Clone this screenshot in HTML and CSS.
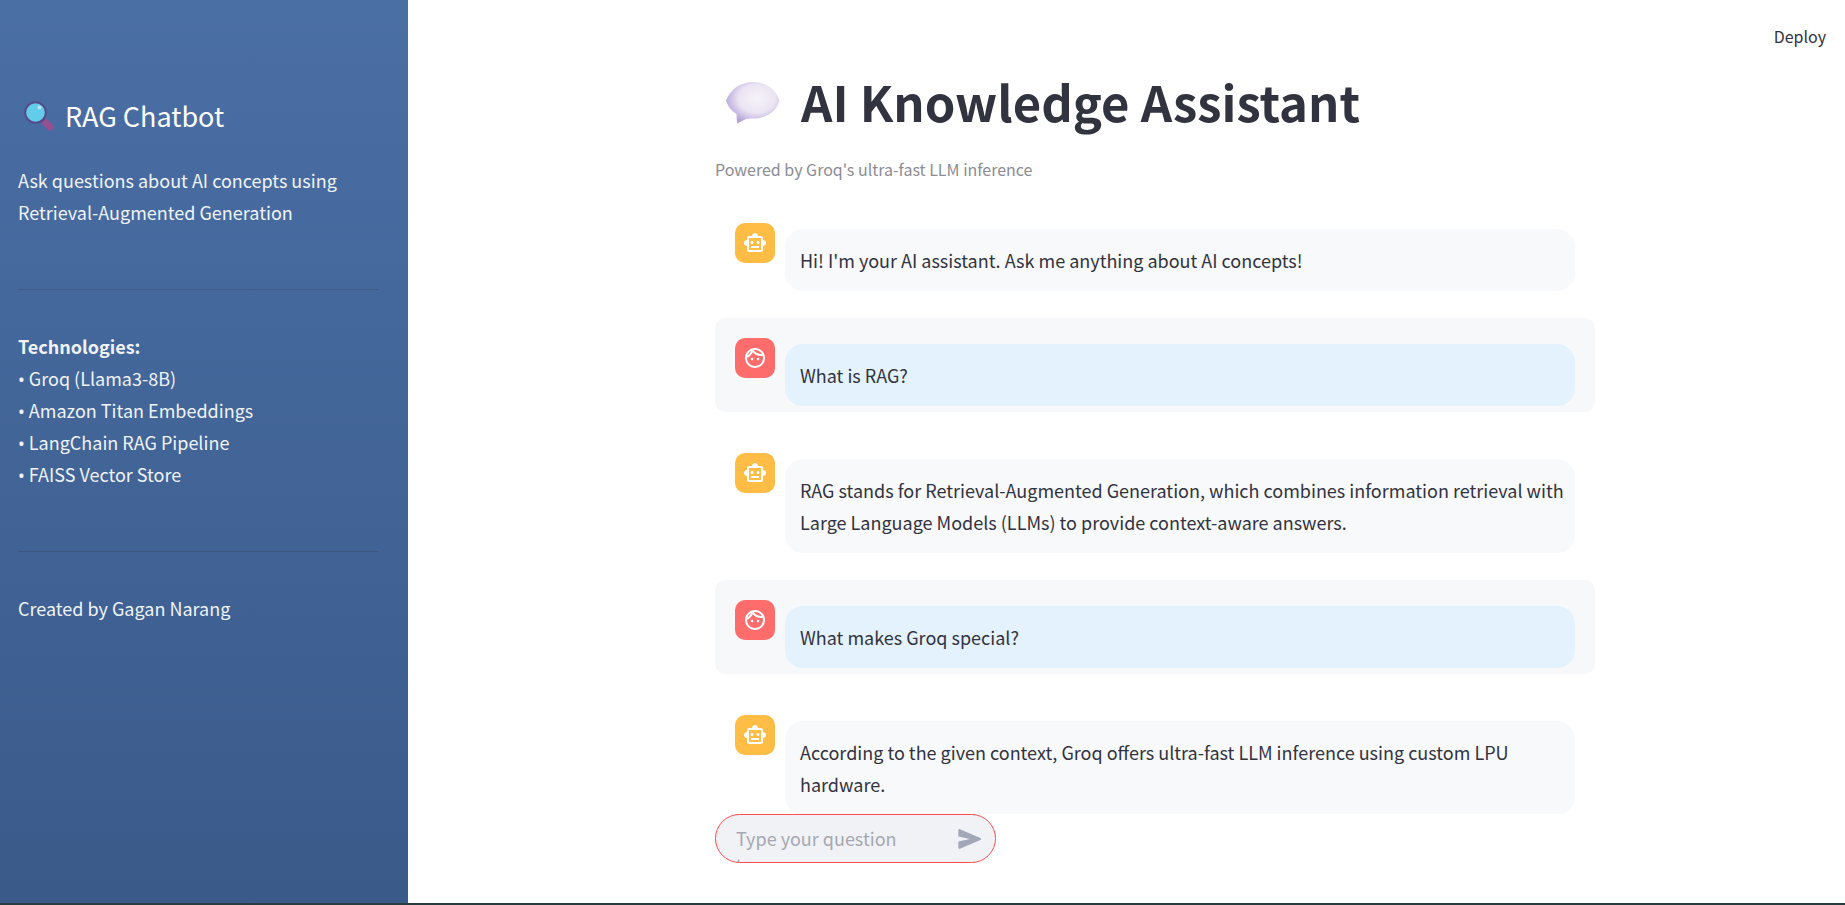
FILE: index.html
```html
<!DOCTYPE html>
<html lang="en">
<head>
<meta charset="utf-8">
<title>AI Knowledge Assistant</title>
<link rel="stylesheet" href="styles.css">
</head>
<body>
<svg class="sprite" aria-hidden="true">
  <symbol id="bot" viewBox="0 0 24 24"><path fill="currentColor" d="M20 9V7c0-1.100-.9-2-2-2h-3c0-1.660-1.340-3-3-3S9 3.340 9 5H6c-1.100 0-2 .9-2 2v2c-1.660 0-3 1.340-3 3s1.340 3 3 3v4c0 1.100.9 2 2 2h12c1.100 0 2-.9 2-2v-4c1.660 0 3-1.340 3-3s-1.340-3-3-3zm-2 10H6V7h12v12zM9 13c-.83 0-1.500-.67-1.500-1.500S8.170 10 9 10s1.500.67 1.500 1.500S9.830 13 9 13zm7.500-1.500c0 .83-.67 1.500-1.500 1.500s-1.500-.67-1.500-1.500.67-1.500 1.500-1.500 1.500.67 1.500 1.500zM8 15h8v2H8v-2z"/></symbol>
  <symbol id="face" viewBox="0 0 24 24"><path fill="currentColor" d="M10.250 13c0 .69-.56 1.250-1.250 1.250S7.750 13.690 7.750 13s.56-1.250 1.250-1.250 1.250.56 1.250 1.250zM15 11.750c-.69 0-1.250.56-1.250 1.250s.56 1.250 1.250 1.250 1.250-.56 1.250-1.250-.56-1.250-1.250-1.250zm7 .25c0 5.520-4.480 10-10 10S2 17.520 2 12 6.480 2 12 2s10 4.480 10 10zM10.660 4.120C12.060 6.440 14.600 8 17.500 8c.46 0 .91-.05 1.340-.12C17.440 5.560 14.900 4 12 4c-.46 0-.91.05-1.340.12zM4.420 9.470c1.710-.97 3.030-2.550 3.660-4.440C6.370 6 5.050 7.580 4.420 9.470zM20 12c0-.78-.12-1.530-.33-2.240-.7.150-1.420.24-2.170.24-3.130 0-5.920-1.440-7.760-3.690C8.690 8.870 6.600 10.880 4 11.860c.01.040 0 .090 0 .14 0 4.410 3.590 8 8 8s8-3.590 8-8z"/></symbol>
</svg>
<div class="app">
  <aside class="sidebar">
    <h2 class="brand">
      <svg class="brand-icon" viewBox="0 0 30 30" aria-hidden="true">
        <path d="M18 18l4 4" stroke="#6b4a86" stroke-width="4"/>
        <path d="M22 22l4 4" stroke="#96508f" stroke-width="7" stroke-linecap="round"/>
        <circle cx="11.500" cy="11.500" r="10.300" fill="#62cdea" stroke="#564b8b" stroke-width="2"/>
        <circle cx="15.500" cy="6.500" r="2" fill="#b5e6f5"/>
      </svg>
      RAG Chatbot
    </h2>
    <p class="side-text">Ask questions about AI concepts using Retrieval-Augmented Generation</p>
    <hr class="divider">
    <p class="side-text"><strong>Technologies:</strong></p>
    <ul class="tech-list">
      <li><span class="dot">•</span> Groq (Llama3-8B)</li>
      <li><span class="dot">•</span> Amazon Titan Embeddings</li>
      <li><span class="dot">•</span> LangChain RAG Pipeline</li>
      <li><span class="dot">•</span> FAISS Vector Store</li>
    </ul>
    <hr class="divider">
    <p class="side-text">Created by Gagan Narang</p>
  </aside>
  <main class="main">
    <header class="toolbar"><button class="deploy" type="button">Deploy</button></header>
    <div class="content">
      <h1 class="title">
        <svg class="title-icon" viewBox="0 0 54 42" aria-hidden="true">
          <defs>
            <radialGradient id="bubble" cx=".58" cy=".4" r=".62">
              <stop offset="0" stop-color="#f6f3f9"/><stop offset=".55" stop-color="#ebe4f3"/><stop offset="1" stop-color="#b3a3d8"/>
            </radialGradient>
          </defs>
          <path fill="url(#bubble)" d="M27 0C14 0 4 8 0 18.500 2 24.500 5.500 29 10.500 32L11 41.500C16 40 18 36.500 24 36.500 38 37.500 50 31 53.500 18.500 50 8 40 0 27 0z"/>
        </svg>
        AI Knowledge Assistant
      </h1>
      <p class="caption">Powered by Groq's ultra-fast LLM inference</p>
      <div class="chat">
        <article class="message">
          <span class="avatar avatar-bot"><svg class="avatar-icon"><use href="#bot"/></svg></span>
          <p class="bubble">Hi! I'm your AI assistant. Ask me anything about AI concepts!</p>
        </article>
        <article class="message message-user">
          <span class="avatar avatar-user"><svg class="avatar-icon"><use href="#face"/></svg></span>
          <p class="bubble bubble-user">What is RAG?</p>
        </article>
        <article class="message">
          <span class="avatar avatar-bot"><svg class="avatar-icon"><use href="#bot"/></svg></span>
          <p class="bubble">RAG stands for Retrieval-Augmented Generation, which combines information retrieval with Large Language Models (LLMs) to provide context-aware answers.</p>
        </article>
        <article class="message message-user">
          <span class="avatar avatar-user"><svg class="avatar-icon"><use href="#face"/></svg></span>
          <p class="bubble bubble-user">What makes Groq special?</p>
        </article>
        <article class="message">
          <span class="avatar avatar-bot"><svg class="avatar-icon"><use href="#bot"/></svg></span>
          <p class="bubble">According to the given context, Groq offers ultra-fast LLM inference using custom LPU hardware.</p>
        </article>
      </div>
    </div>
    <div class="bottom">
      <form class="composer">
        <textarea class="composer-input" aria-label="Your question" placeholder="Type your question here..."></textarea>
        <button class="send" type="button" aria-label="Send">
          <svg class="send-icon" viewBox="0 0 24 24" aria-hidden="true"><path fill="currentColor" d="M3.400 20.400l17.450-7.480c.81-.35.81-1.490 0-1.840L3.400 3.600c-.66-.29-1.390.2-1.390.91L2 9.120c0 .5.37.93.87.99L12 12 2.870 13.880c-.5.07-.87.5-.87 1l.01 4.610c0 .71.73 1.200 1.390.91z"/></svg>
        </button>
      </form>
    </div>
  </main>
</div>
</body>
</html>
```
FILE: styles.css
```css
* {
  box-sizing: border-box;
}

body {
  margin: 0;
  color: #31333f;
  background: #fff;
  font-family: "Noto Sans CJK SC", "Noto Sans", sans-serif;
  font-size: 18px;
  line-height: 32px;
}

.sprite {
  display: none;
}

.app {
  display: flex;
  height: 100vh;
  border-bottom: 2px solid #263c3e;
}

.sidebar {
  flex: none;
  width: 408px;
  padding: 96px 30px 20px 18px;
  color: #eff3f7;
  background: linear-gradient(#4a6fa5, #3a5a8a);
}

.brand {
  display: flex;
  align-items: center;
  gap: 11px;
  margin: 0 0 28px;
  padding-left: 6px;
  color: #fff;
  font-size: 27px;
  font-weight: 400;
  line-height: 40px;
}

.brand-icon {
  width: 30px;
  height: 30px;
}

.side-text {
  margin: 0;
}

.tech-list {
  margin: 0;
  padding: 0;
  list-style: none;
}

.dot {
  font-family: "Noto Sans", sans-serif;
  line-height: 1;
}

.divider {
  height: 1px;
  margin: 61px 0 40px;
  border: 0;
  background: rgba(49, 51, 63, 0.25);
}

.main {
  display: flex;
  flex: 1;
  flex-direction: column;
  min-width: 0;
}

.toolbar {
  display: flex;
  justify-content: flex-end;
  padding: 20px 19px 0;
}

.deploy {
  padding: 0;
  border: 0;
  color: inherit;
  background: none;
  font: inherit;
  font-size: 16px;
  line-height: 32px;
}

.content,
.bottom {
  width: 100%;
  padding: 0 250px 0 307px;
}

.content {
  flex: 1;
  min-height: 0;
  overflow: hidden;
}

.title {
  display: flex;
  align-items: center;
  gap: 21px;
  margin: 13px 0 16px;
  padding-left: 11px;
  font-size: 49px;
  font-weight: 700;
  line-height: 72px;
}

.title-icon {
  width: 54px;
  height: 42px;
  margin-top: 4px;
}

.caption {
  margin: 0;
  color: #8b8c94;
  font-size: 16px;
}

.chat {
  display: flex;
  flex-direction: column;
  gap: 21px;
  padding-top: 18px;
}

.message {
  display: flex;
  align-items: flex-start;
  gap: 10px;
  padding: 20px 20px 6px;
  border-radius: 10px;
}

.message-user {
  background: #f7f8fa;
}

.avatar {
  display: flex;
  flex: none;
  align-items: center;
  justify-content: center;
  width: 40px;
  height: 40px;
  border-radius: 10px;
  color: #fff;
}

.avatar-bot {
  background: #ffbd45;
}

.avatar-user {
  background: #ff6c6c;
}

.avatar-icon {
  width: 24px;
  height: 24px;
}

.bubble {
  flex: 1;
  margin: 6px 0 0;
  padding: 15px 10px 15px 15px;
  border-radius: 18px;
  background: #f8f9fb;
}

.bubble-user {
  background: #e3f2fd;
}

.bottom {
  padding-bottom: 40px;
}

.composer {
  display: flex;
  align-items: center;
  gap: 16px;
  width: 281px;
  height: 49px;
  padding: 0 11px 0 20px;
  overflow: hidden;
  border: 1px solid #ff4b4b;
  border-radius: 25px;
  background: #f0f2f6;
}

.composer-input {
  flex: 1;
  min-width: 0;
  height: 47px;
  padding: 9px 0 0;
  overflow: hidden;
  border: 0;
  outline: 0;
  color: #31333f;
  background: none;
  font: inherit;
  line-height: 28px;
  resize: none;
}

.composer-input::placeholder {
  color: #a6a8b1;
}

.send {
  display: flex;
  padding: 0;
  border: 0;
  color: #a3a8b8;
  background: none;
}

.send-icon {
  width: 28px;
  height: 28px;
}
```
